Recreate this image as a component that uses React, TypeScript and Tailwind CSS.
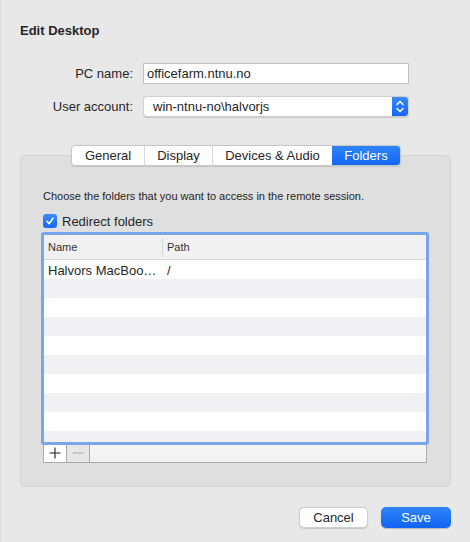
import React from "react";

const tabs = [
  { label: "General", w: "w-[72px]" },
  { label: "Display", w: "w-[68px]" },
  { label: "Devices & Audio", w: "w-[120px]" },
  { label: "Folders", w: "w-[68px]", active: true },
];

const rows = Array.from({ length: 10 }, (_, i) => i);

function Stepper() {
  return (
    <svg width="16" height="21" viewBox="0 0 16 21" fill="none">
      <path d="M5 8.5 L8 5.5 L11 8.5" stroke="white" strokeWidth="1.4" strokeLinecap="round" strokeLinejoin="round" />
      <path d="M5 12.5 L8 15.5 L11 12.5" stroke="white" strokeWidth="1.4" strokeLinecap="round" strokeLinejoin="round" />
    </svg>
  );
}

export default function App() {
  return (
    <div className="w-[470px] h-[542px] bg-[#e8e8e8] border-l border-[#dcdcdc] font-['Liberation_Sans',Arial,sans-serif] text-[13px] text-[#262626]">
      <h1 className="pl-[19px] pt-[23px] font-bold text-[13px] leading-4 text-[#262626]">Edit Desktop</h1>

      {/* connection fields */}
      <div className="mt-[24px] flex items-center">
        <label className="w-[132px] text-right leading-4 pt-px">PC name:</label>
        <div className="ml-[10px] w-[266px] h-[21px] bg-white border border-[#c2c2c2] pl-[3px] pt-px flex items-center leading-4 text-[#1f1f1f]">
          officefarm.ntnu.no
        </div>
      </div>
      <div className="mt-[12px] flex items-center">
        <label className="w-[132px] text-right leading-4 pt-px">User account:</label>
        <div className="ml-[10px] w-[266px] h-[21px] bg-white rounded-[4px] border border-[#d0d0d0] shadow-[0_0.5px_1px_rgba(0,0,0,0.15)] flex items-center justify-between overflow-hidden">
          <span className="pl-[9px] pt-px leading-4 text-[#1f1f1f]">win-ntnu-no\halvorjs</span>
          <div className="w-[16px] h-full bg-gradient-to-b from-[#3a8afa] to-[#1565f5] flex items-center justify-center">
            <Stepper />
          </div>
        </div>
      </div>

      {/* tab view */}
      <div className="mt-[28px]">
        <div className="relative z-10 ml-[70px] flex h-[21px] w-fit rounded-[4px] border border-[#c8c8c8] bg-white shadow-[0_0.5px_1px_rgba(0,0,0,0.12)] overflow-hidden">
          {tabs.map((t, i) => (
            <div
              key={t.label}
              className={`${t.w} flex items-center justify-center pt-px leading-4 ${
                t.active
                  ? "bg-gradient-to-b from-[#2f84fb] to-[#1466f5] text-white"
                  : "text-[#262626]"
              } ${i > 0 && !t.active ? "border-l border-[#d8d8d8]" : ""}`}
            >
              {t.label}
            </div>
          ))}
        </div>

        <div className="-mt-[11px] mx-[19px] h-[332px] rounded-[5px] border border-[#d4d4d4] bg-[#dfdfdf] pl-[20px] pt-[33px]">
          <p className="ml-[2px] text-[11px] leading-[14px] text-[#262626]">
            Choose the folders that you want to access in the remote session.
          </p>

          <div className="ml-[2px] mt-[11px] flex items-center h-[14px]">
            <div className="w-[14px] h-[14px] rounded-[3px] bg-gradient-to-b from-[#3a8afa] to-[#1565f5] flex items-center justify-center">
              <svg width="10" height="10" viewBox="0 0 10 10" fill="none">
                <path d="M2 5.3 L4.1 7.6 L8 2.2" stroke="white" strokeWidth="1.6" strokeLinecap="round" strokeLinejoin="round" />
              </svg>
            </div>
            <span className="ml-[5px] pt-px leading-4">Redirect folders</span>
          </div>

          {/* folder table */}
          <div className="relative z-10 mt-[4px] w-[388px] h-[213px] rounded-[3px] border-[3px] border-[#78a5ee] bg-white overflow-hidden">
            <div className="h-[25px] flex items-center bg-[#f1f1f1] border-b border-[#d8d8d8] text-[11px] text-[#333]">
              <div className="w-[119px] h-[19px] pl-[4px] flex items-center border-r border-[#d6d6d6]">Name</div>
              <div className="pl-[4px]">Path</div>
            </div>
            {rows.map((i) => (
              <div
                key={i}
                className={`h-[19px] flex items-center pt-[2px] ${i % 2 === 1 ? "bg-[#f1f1f3]" : "bg-white"}`}
              >
                {i === 0 && (
                  <>
                    <div className="w-[119px] pl-[4px] leading-4 whitespace-nowrap overflow-hidden">Halvors MacBoo…</div>
                    <div className="pl-[4px] leading-4">/</div>
                  </>
                )}
              </div>
            ))}
          </div>

          <div className="-mt-[3px] ml-[2px] w-[384px] h-[21px] flex border border-[#aaaaaa] bg-gradient-to-b from-[#f7f7f7] to-[#f1f1f1]">
            <div className="w-[23px] h-full bg-white border-r border-[#aaaaaa] flex items-center justify-center">
              <svg width="12" height="12" viewBox="0 0 12 12">
                <path d="M6 0.5 V11.5 M0.5 6 H11.5" stroke="#1e1e1e" strokeWidth="1.1" />
              </svg>
            </div>
            <div className="w-[23px] h-full bg-[#e6e6e6] border-r border-[#aaaaaa] flex items-center justify-center">
              <svg width="12" height="12" viewBox="0 0 12 12">
                <path d="M0.5 6 H11.5" stroke="#b3b3b3" strokeWidth="1.1" />
              </svg>
            </div>
          </div>
        </div>
      </div>

      {/* dialog buttons */}
      <div className="mt-[20px] pr-[19px] flex justify-end gap-[13px]">
        <button className="w-[69px] h-[21px] rounded-[5px] bg-white border border-[#cfcfcf] shadow-[0_0.5px_1px_rgba(0,0,0,0.15)] pt-px leading-4 text-[#262626]">
          Cancel
        </button>
        <button className="w-[70px] h-[21px] rounded-[5px] bg-gradient-to-b from-[#2f84fb] to-[#1163f3] shadow-[0_0.5px_1px_rgba(0,0,0,0.2)] pt-px leading-4 text-white">
          Save
        </button>
      </div>
    </div>
  );
}
